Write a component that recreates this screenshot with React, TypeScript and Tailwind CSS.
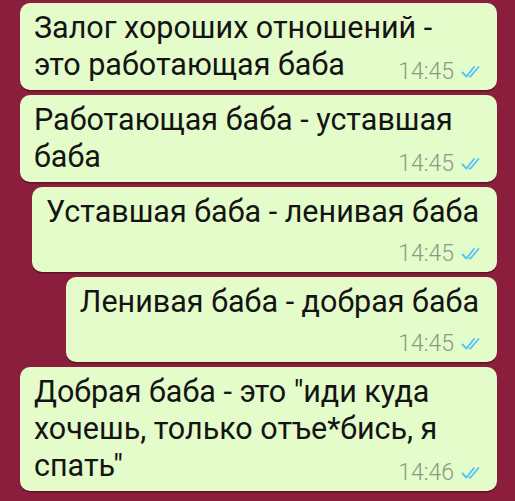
import React from "react";

function Ticks() {
  return (
    <svg width="22" height="14" viewBox="0 0 22 14" fill="none" className="ml-[7px] shrink-0">
      <path d="M1.5 7.5 L5.5 11.5 L13 2" stroke="#4fc3f7" strokeWidth="1.8" strokeLinecap="round" strokeLinejoin="round" />
      <path d="M8.5 11.5 L9.5 11.5 L17.5 2" stroke="#4fc3f7" strokeWidth="1.8" strokeLinecap="round" strokeLinejoin="round" />
    </svg>
  );
}

function Time({ t }: { t: string }) {
  return (
    <span className="flex items-center shrink-0 ml-4 mr-[-4px]">
      <span className="text-[23px] leading-[23px] font-light text-[#8a9a82]">{t}</span>
      <Ticks />
    </span>
  );
}

function Bubble({ lines, last, time, full }: { lines: string[]; last: string; time: string; full?: boolean }) {
  return (
    <div
      className={
        "bg-[#e3fcca] rounded-[10px] pl-[14px] pr-[18px] pt-[6px] pb-[7px] shadow-[0_1.5px_0_rgba(60,10,25,0.55)] " +
        (full ? "w-[477px]" : "")
      }
    >
      {lines.map((l, i) => (
        <div key={i} className="leading-[37px] whitespace-nowrap">
          {l}
        </div>
      ))}
      <div className={"flex items-end justify-between " + (last ? "" : "h-[35px]")}>
        <span className="leading-[37px] whitespace-nowrap">{last}</span>
        <Time t={time} />
      </div>
    </div>
  );
}

export default function App() {
  return (
    <div
      className="w-[515px] h-[501px] overflow-hidden bg-[#8b1d3d] flex flex-col items-end pr-[18px] pt-[3px] gap-[5px] text-[30.5px] text-[#141414]"
      style={{ fontFamily: "Roboto, 'Noto Sans', sans-serif" }}
    >
      <Bubble full lines={["Залог хороших отношений -"]} last="это работающая баба" time="14:45" />
      <Bubble full lines={["Работающая баба - уставшая"]} last="баба" time="14:45" />
      <Bubble lines={["Уставшая баба - ленивая баба"]} last="" time="14:45" />
      <Bubble lines={["Ленивая баба - добрая баба"]} last="" time="14:45" />
      <Bubble full lines={['Добрая баба - это "иди куда', "хочешь, только отъе*бись, я"]} last={'спать"'} time="14:46" />
    </div>
  );
}
